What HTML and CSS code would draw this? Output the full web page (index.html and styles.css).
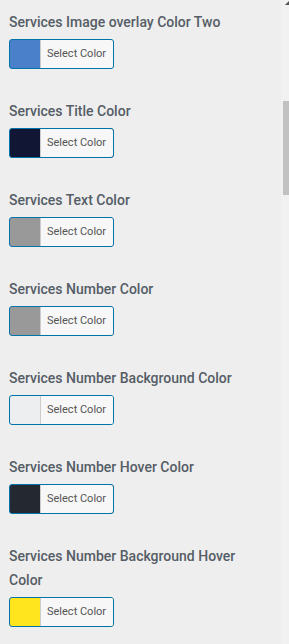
FILE: index.html
```html
<!DOCTYPE html>
<html lang="en">
<head>
  <meta charset="UTF-8" />
  <meta name="viewport" content="width=device-width, initial-scale=1.0"/>
  <title>Services Colors</title>
  <link rel="stylesheet" href="styles.css">
</head>
<body>
  <div class="panel">
    <!-- Color controls -->
    <ul class="controls">
      <li class="control">
        <span class="control-title">Services Image overlay Color Two</span>
        <button class="color-result swatch-blue"><span class="color-text">Select Color</span></button>
      </li>
      <li class="control">
        <span class="control-title">Services Title Color</span>
        <button class="color-result swatch-navy"><span class="color-text">Select Color</span></button>
      </li>
      <li class="control">
        <span class="control-title">Services Text Color</span>
        <button class="color-result swatch-gray"><span class="color-text">Select Color</span></button>
      </li>
      <li class="control">
        <span class="control-title">Services Number Color</span>
        <button class="color-result swatch-gray"><span class="color-text">Select Color</span></button>
      </li>
      <li class="control">
        <span class="control-title">Services Number Background Color</span>
        <button class="color-result swatch-light"><span class="color-text">Select Color</span></button>
      </li>
      <li class="control">
        <span class="control-title">Services Number Hover Color</span>
        <button class="color-result swatch-dark"><span class="color-text">Select Color</span></button>
      </li>
      <li class="control">
        <span class="control-title">Services Number Background Hover Color</span>
        <button class="color-result swatch-yellow"><span class="color-text">Select Color</span></button>
      </li>
    </ul>

    <!-- Scrollbar -->
    <div class="scrollbar">
      <div class="scroll-arrow"></div>
      <div class="scroll-thumb"></div>
    </div>
  </div>
</body>
</html>
```

FILE: styles.css
```css
* {
  margin: 0; padding: 0; box-sizing: border-box;
}

body {
  background-color: #eeeeee;
  font-family: Roboto, "Liberation Sans", sans-serif;
  color: #555d66;
}

.panel {
  display: flex;
  height: 644px;
  overflow: hidden;
}

.controls {
  flex: 1;
  list-style: none;
  padding: 10px 20px 0 9px;
}

.control {
  margin-bottom: 30px;
}

.control-title {
  display: block;
  font-size: 14px;
  font-weight: 500;
  line-height: 24px;
  margin-bottom: 5px;
}

.color-result {
  display: block;
  height: 30px;
  padding-left: 30px;
  border: 1px solid #0073aa;
  border-radius: 3px;
  overflow: hidden;
  cursor: pointer;
  font-family: Roboto, "Liberation Sans", sans-serif;
}

.color-text {
  display: block;
  height: 28px;
  line-height: 28px;
  padding: 0 7px 0 6px;
  background: #f7f7f7;
  border-left: 1px solid #cccccc;
  color: #555555;
  font-size: 11px;
}

.swatch-blue { background: #4a7fc9; }
.swatch-navy { background: #111635; }
.swatch-gray { background: #999999; }
.swatch-light { background: #eceef0; }
.swatch-dark { background: #242830; }
.swatch-yellow { background: #ffe51e; }

.scrollbar {
  width: 8px;
  background: #f1f1f1;
  display: flex;
  flex-direction: column;
  align-items: flex-end;
}

.scroll-arrow {
  width: 0;
  height: 0;
  margin: 1px 0 0;
  border-left: 4px solid transparent;
  border-bottom: 4px solid #505050;
}

.scroll-thumb {
  width: 6px;
  height: 94px;
  margin-top: 96px;
  background: #c1c1c1;
}
```
